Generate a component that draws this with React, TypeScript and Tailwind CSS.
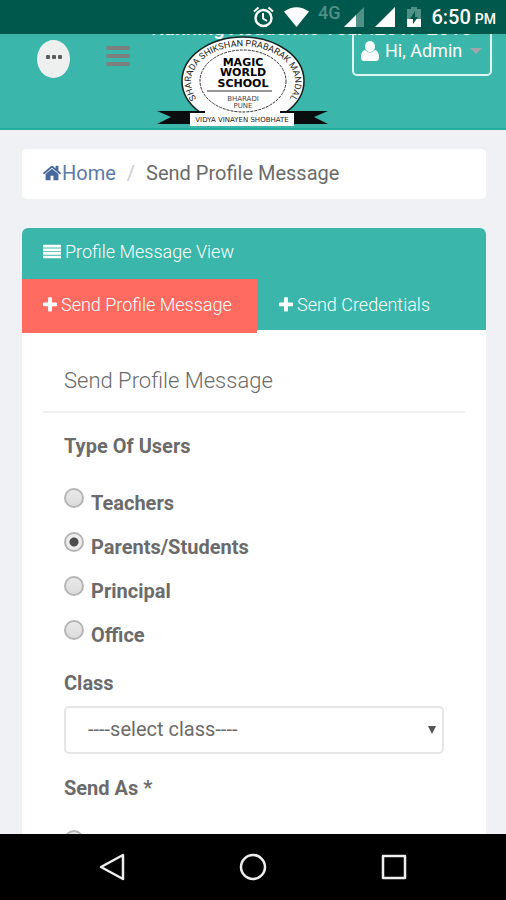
import { useState, type ReactNode } from "react";

function Glyph({ d, className }: { d: string; className: string }) {
  return (
    <svg viewBox="0 0 1792 1792" fill="currentColor" aria-hidden="true" className={className}>
      <path d={d} />
    </svg>
  );
}

const HOME =
  "M1472 992v480q0 26-19 45t-45 19h-384v-384h-256v384h-384q-26 0-45-19t-19-45v-480q0-1 .5-3t.5-3l575-474 575 474q1 2 1 6zm223-69l-62 74q-8 9-21 11h-3q-13 0-21-7l-692-577-692 577q-12 8-24 7-13-2-21-11l-62-74q-8-10-7-23.500t11-21.500l719-599q32-26 76-26t76 26l244 204v-195q0-14 9-23t23-9h192q14 0 23 9t9 23v408l219 182q10 8 11 21.500t-7 23.500z";
const PLUS =
  "M1600 736v192q0 40-28 68t-68 28h-416v416q0 40-28 68t-68 28h-192q-40 0-68-28t-28-68v-416h-416q-40 0-68-28t-28-68v-192q0-40 28-68t68-28h416v-416q0-40 28-68t68-28h192q40 0 68 28t28 68v416h416q40 0 68 28t28 68z";
const LINES = "M0 180h1792v270H0zM0 540h1792v270H0zM0 900h1792v270H0zM0 1260h1792v270H0z";

function StatusBar() {
  return (
    <div className="relative z-10 flex h-[34px] shrink-0 items-center justify-end bg-[#00574b] pr-[10px] text-white">
      <svg width="23" height="24" viewBox="0 0 23 24" fill="none" stroke="currentColor" strokeWidth="2" className="mr-[9px]" aria-label="Alarm">
        <circle cx="11.500" cy="13" r="8" strokeWidth="2.400" />
        <path d="M11 8v5.500l4 2.500M2 6.500l4.500-4M21 6.500l-4.500-4" />
      </svg>
      <svg width="25" height="20" viewBox="0 0 25 20" fill="currentColor" className="mr-[9px]" aria-label="Wi-Fi">
        <path d="M0 4.500Q12.500-4 25 4.500L12.500 20z" />
      </svg>
      <span className="mr-1 h-8 text-lg leading-6 font-medium text-[#4f9087]">4G</span>
      <svg width="22" height="20" viewBox="0 0 22 20" className="mr-[9px]" aria-label="Signal 1">
        <path d="M0 20L20 0v20z" fill="#4f9087" />
        <path d="M0 20L12 8v12z" fill="#fff" />
      </svg>
      <svg width="20" height="20" viewBox="0 0 20 20" className="mr-3" aria-label="Signal 2">
        <path d="M0 20L20 0v20z" fill="#fff" />
      </svg>
      <svg width="14" height="20" viewBox="0 0 14 20" className="mr-[10px]" aria-label="Battery">
        <path d="M4 0h6v2h4v18H0V2h4z" fill="#4f9087" />
        <path d="M0 12h14v8H0z" fill="#fff" />
        <path d="M8 4l-5 8h3v5l5-7H8z" fill="#00574b" />
      </svg>
      <span className="flex items-baseline gap-1 font-medium">
        <span className="text-xl leading-6">6:50</span>
        <span className="text-sm">PM</span>
      </span>
    </div>
  );
}

function SchoolLogo() {
  return (
    <svg width="171" height="91" viewBox="0 0 171 91" className="shrink-0" fontFamily="'DejaVu Sans', sans-serif" aria-label="Magic World School">
      <defs>
        <path id="rim" d="M40 63A52 36 0 1 1 132 63" />
      </defs>
      <ellipse cx="86" cy="45" rx="61" ry="44" fill="#fff" stroke="#16201f" strokeWidth="1.500" />
      <ellipse cx="86" cy="45" rx="43" ry="31" fill="none" stroke="#333" strokeWidth="1" strokeDasharray="3 1" />
      <path d="M0 75h48v13H0l14-7zM171 75h-48v13h48l-14-7z" fill="#090d0d" />
      <text fontFamily="Roboto, sans-serif" fontSize="9" fill="#222">
        <textPath href="#rim" startOffset="50%" textAnchor="middle">
          SHARADA SHIKSHAN PRABARAK MANDAL
        </textPath>
      </text>
      <g textAnchor="middle" fill="#000" fontWeight="700" fontSize="11">
        <text x="86" y="30">MAGIC</text>
        <text x="86" y="40">WORLD</text>
        <text x="86" y="51">SCHOOL</text>
      </g>
      <path d="M50 55h65" stroke="#333" strokeWidth="1" />
      <g textAnchor="middle" fill="#444" fontSize="7">
        <text x="86" y="65">BHARADI</text>
        <text x="86" y="72">PUNE</text>
      </g>
      <path d="M33 77h104v13H33z" fill="#fff" />
      <text x="85" y="86" textAnchor="middle" fontSize="7" fill="#222">
        VIDYA VINAYEN SHOBHATE
      </text>
    </svg>
  );
}

function Header() {
  return (
    <header className="relative flex h-24 shrink-0 items-start border-b-2 border-[#24ac9f] bg-[#3ab6ab] pl-[37px] pr-[14px]">
      <button aria-label="More" className="mt-[6px] flex h-[38px] w-[33px] items-center justify-center gap-[2px] rounded-[50%] bg-[#eeefef] pb-1">
        <span className="size-1 rounded-[1px] bg-[#5c5c5c]" />
        <span className="size-1 rounded-[1px] bg-[#5c5c5c]" />
        <span className="size-1 rounded-[1px] bg-[#5c5c5c]" />
      </button>
      <button aria-label="Menu" className="mt-3 ml-9 flex w-6 flex-col gap-1">
        <span className="h-1 rounded-sm bg-[#7c7f7e]" />
        <span className="h-1 rounded-sm bg-[#7c7f7e]" />
        <span className="h-1 rounded-sm bg-[#7c7f7e]" />
      </button>
      <div className="relative z-10 mt-[2px] ml-[27px]">
        <SchoolLogo />
      </div>
      <button className="-mt-2 ml-auto flex h-[50px] w-[140px] items-center rounded-[5px] border-2 border-[#dff5f2] pl-[7px] text-lg text-white">
        <svg viewBox="0 0 18 20" fill="currentColor" aria-hidden="true" className="mr-[6px] h-5 w-[18px]">
          <ellipse cx="9" cy="5.500" rx="5" ry="5.500" />
          <path d="M4 9Q9 14 14 9Q18 10 18 16.500Q18 20 15 20H3Q0 20 0 16.500Q0 10 4 9z" />
        </svg>
        <span className="whitespace-nowrap">Hi, Admin</span>
        <span className="ml-2 border-x-[6px] border-t-[6px] border-x-transparent border-t-[#a0a5ab]" />
      </button>
      <p className="absolute -top-[18px] left-[151px] whitespace-nowrap text-xl leading-6 font-medium text-white">
        Running Academic Year :2017-2018
      </p>
    </header>
  );
}

function UserOption({ label, checked, onSelect }: { label: string; checked: boolean; onSelect: () => void }) {
  return (
    <label className="flex h-11 items-start gap-[7px] font-bold">
      <input
        type="radio"
        name="userType"
        checked={checked}
        onChange={onSelect}
        className="size-5 appearance-none rounded-full border-2 border-[#b5b5b5] bg-linear-to-b from-[#e9e9e9] to-[#dcdcdc] checked:bg-[radial-gradient(circle,#4c4c4c_4px,#ededed_5px)]"
      />
      <span className="pt-[3px] leading-6">{label}</span>
    </label>
  );
}

function Tab({ active, children }: { active?: boolean; children: ReactNode }) {
  return (
    <a
      href="#"
      className={
        active
          ? "relative -mb-[3px] flex h-[54px] w-[235px] items-center gap-[3px] bg-[#ff6b60] pb-[3px] pl-5"
          : "flex h-[51px] items-center gap-[3px] pl-[21px]"
      }
    >
      <Glyph d={PLUS} className="-mx-px size-[18px]" />
      {children}
    </a>
  );
}

const USERS = ["Teachers", "Parents/Students", "Principal", "Office"];

export default function App() {
  const [user, setUser] = useState("Parents/Students");
  return (
    <div className="flex h-screen flex-col overflow-hidden bg-[#eff1f5] font-[Roboto,sans-serif] text-[#6b6b6b]">
      <StatusBar />
      <div className="flex min-h-0 flex-1 flex-col overflow-hidden">
        <Header />
        <main className="pt-[19px] pr-5 pl-[22px]">
          <nav aria-label="Breadcrumb" className="flex h-[50px] items-center rounded-[5px] bg-white pb-[2px] pl-5 text-xl">
            <a href="#" className="flex items-center text-[#5b7aa5]">
              <Glyph d={HOME} className="size-5 text-[#48699b]" />
              Home
            </a>
            <span className="mx-[11px] text-[#ccc]">/</span>
            <span>Send Profile Message</span>
          </nav>
          <section className="mt-[29px] rounded-t-[6px] bg-white">
            <div className="rounded-t-[6px] bg-[#3ab6ab] text-lg font-light text-white">
              <h1 className="flex h-[51px] items-center gap-1 pb-[3px] pl-[21px]">
                <Glyph d={LINES} className="size-[18px]" />
                Profile Message View
              </h1>
              <div className="flex h-[51px] items-start">
                <Tab active>Send Profile Message</Tab>
                <Tab>Send Credentials</Tab>
              </div>
            </div>
            <form className="px-[21px] pt-[35px] text-xl">
              <h2 className="border-b-2 border-[#f0f1f2] pb-[14px] pl-[21px] text-[22px] leading-8 font-light">Send Profile Message</h2>
              <div className="px-[21px] pt-[21px]">
                <fieldset>
                  <legend className="leading-6 font-bold">Type Of Users</legend>
                  <div className="pt-[30px]">
                    {USERS.map((name) => (
                      <UserOption key={name} label={name} checked={user === name} onSelect={() => setUser(name)} />
                    ))}
                  </div>
                </fieldset>
                <label htmlFor="class" className="mt-[7px] block leading-6 font-bold">
                  Class
                </label>
                <div className="relative mt-[11px]">
                  <select id="class" className="h-12 w-full appearance-none rounded-[5px] border-2 border-[#e4e6e7] bg-white pb-[2px] pl-[22px]">
                    <option>----select class----</option>
                  </select>
                  <span className="pointer-events-none absolute top-5 right-2 border-x-4 border-t-8 border-x-transparent border-t-[#555]" />
                </div>
                <fieldset className="mt-[22px]">
                  <legend className="leading-6 font-bold">Send As *</legend>
                  <div className="pt-[30px]">
                    <input
                      type="radio"
                      aria-label="Send as"
                      className="block size-5 appearance-none rounded-full border-2 border-[#b5b5b5] bg-[#e6e6e6]"
                    />
                  </div>
                </fieldset>
              </div>
            </form>
          </section>
        </main>
      </div>
      <footer className="flex h-[66px] shrink-0 items-center justify-around bg-black px-[41px] text-[#eee]">
        <button aria-label="Back">
          <svg width="28" height="28" viewBox="0 0 28 28" fill="none" stroke="currentColor" strokeWidth="2.500" strokeLinejoin="round">
            <path d="M25 2v24L3 14z" />
          </svg>
        </button>
        <button aria-label="Home">
          <svg width="28" height="28" viewBox="0 0 28 28" fill="none" stroke="currentColor" strokeWidth="2.500">
            <circle cx="14" cy="14" r="12" />
          </svg>
        </button>
        <button aria-label="Recent apps">
          <svg width="28" height="28" viewBox="0 0 28 28" fill="none" stroke="currentColor" strokeWidth="2.500" strokeLinejoin="round">
            <path d="M3 3h22v22H3z" />
          </svg>
        </button>
      </footer>
    </div>
  );
}
